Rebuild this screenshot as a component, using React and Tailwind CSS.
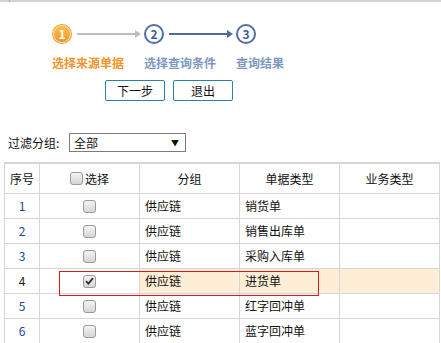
const CJK = "font-['Microsoft_YaHei','Noto_Sans_CJK_SC',sans-serif]";

const ROWS = [
    { no: 1, group: "供应链", type: "销货单" },
    { no: 2, group: "供应链", type: "销售出库单" },
    { no: 3, group: "供应链", type: "采购入库单" },
    { no: 4, group: "供应链", type: "进货单", checked: true },
    { no: 5, group: "供应链", type: "红字回冲单" },
    { no: 6, group: "供应链", type: "蓝字回冲单" },
];

const Checkbox = ({ checked }) => (
    <span className="inline-flex items-center justify-center w-[13px] h-[13px] rounded-[3px] border border-[#9a9a9a] bg-gradient-to-b from-[#f4f4f4] to-[#d6d6d6]">
        {checked && (
            <svg width="9" height="8" viewBox="0 0 9 8">
                <path d="M1 4.2 L3.4 6.6 L8 1.2" stroke="#333" strokeWidth="1.8" fill="none" />
            </svg>
        )}
    </span>
);

const Arrow = ({ color }) => (
    <div className="flex items-center ml-[5px]">
        <div className="w-[58px] h-[2px]" style={{ background: color }} />
        <div
            className="w-0 h-0 border-y-[4px] border-y-transparent border-l-[6px]"
            style={{ borderLeftColor: color }}
        />
    </div>
);

const Step = ({ n, label, active, arrow }) => (
    <div className="w-[92px] flex flex-col">
        <div className="flex items-center h-[20px]">
            {active ? (
                <div className="w-[20px] h-[20px] rounded-full bg-[#f19a2c] p-[1px]">
                    <div className="w-full h-full rounded-full border border-[#fde6b8] bg-gradient-to-b from-[#fbc150] to-[#f0962a] flex items-center justify-center text-white text-[12px] font-bold leading-none">
                        {n}
                    </div>
                </div>
            ) : (
                <div className="w-[20px] h-[20px] rounded-full border-2 border-[#4f6ea3] bg-white flex items-center justify-center text-[#3f5f96] text-[12px] font-bold leading-none">
                    {n}
                </div>
            )}
            {arrow && <Arrow color={arrow} />}
        </div>
        <div
            className={`mt-[12px] text-[12px] font-bold leading-[14px] whitespace-nowrap ${
                active ? "text-[#f0932b]" : "text-[#7d97c3]"
            }`}
        >
            {label}
        </div>
    </div>
);

const Cell = ({ className = "", children }) => (
    <div className={`border-r border-b border-[#d6d6d6] flex items-center text-[12px] ${className}`}>
        {children}
    </div>
);

export default function App() {
    return (
        <div className={`relative w-[441px] h-[343px] overflow-hidden bg-white text-[#111] ${CJK}`}>
            <div className="flex h-[2px] bg-[#d2d2d2]">
                <div className="w-[9px]" />
                <div className="w-[1px] bg-[#b0b0b0]" />
            </div>

            <div className="flex pl-[52px] pt-[22px]">
                <Step n={1} label="选择来源单据" active arrow="#bcbcbc" />
                <Step n={2} label="选择查询条件" arrow="#4d6b9c" />
                <Step n={3} label="查询结果" />
            </div>

            <div className="flex gap-[8px] pl-[105px] mt-[10px]">
                <button className="w-[60px] h-[21px] rounded-[2px] border border-[#2a7fa8] bg-white text-[12px] text-[#111] leading-none">
                    下一步
                </button>
                <button className="w-[60px] h-[21px] rounded-[2px] border border-[#2a7fa8] bg-white text-[12px] text-[#111] leading-none">
                    退出
                </button>
            </div>

            <div className="flex items-center pl-[8px] mt-[32px] h-[19px]">
                <span className="text-[12px] w-[61px]">过滤分组:</span>
                <div className="w-[117px] h-[19px] border border-[#7c7c7c] flex items-center justify-between pl-[4px] pr-[6px] text-[12px]">
                    <span>全部</span>
                    <span className="text-[8px] leading-none">▼</span>
                </div>
            </div>

            <div className="ml-[4px] mt-[10px] border-l border-t-2 border-[#d6d6d6] w-[436px]">
                <div className="grid grid-cols-[35px_100px_100px_100px_100px] h-[30px]">
                    <Cell className="justify-center">序号</Cell>
                    <Cell className="justify-center gap-[2px]">
                        <Checkbox />
                        <span>选择</span>
                    </Cell>
                    <Cell className="justify-center">分组</Cell>
                    <Cell className="justify-center">单据类型</Cell>
                    <Cell className="justify-center">业务类型</Cell>
                </div>
                {ROWS.map((r) => (
                    <div key={r.no} className="grid grid-cols-[35px_100px_100px_100px_100px] h-[25px]">
                        <Cell className={`justify-center ${r.checked ? "text-[#222]" : "text-[#1c3f94]"}`}>{r.no}</Cell>
                        <Cell className="justify-center">
                            <Checkbox checked={r.checked} />
                        </Cell>
                        <Cell className={`pl-[5px] ${r.checked ? "bg-[#fdeed5]" : ""}`}>{r.group}</Cell>
                        <Cell className={`pl-[5px] ${r.checked ? "bg-[#fdeed5]" : ""}`}>{r.type}</Cell>
                        <Cell className={r.checked ? "bg-[#fdeed5]" : ""} />
                    </div>
                ))}
            </div>

            <div className="absolute left-[59px] top-[271px] w-[260px] h-[25px] border-[1.5px] border-[#e3161b]" />
        </div>
    );
}
